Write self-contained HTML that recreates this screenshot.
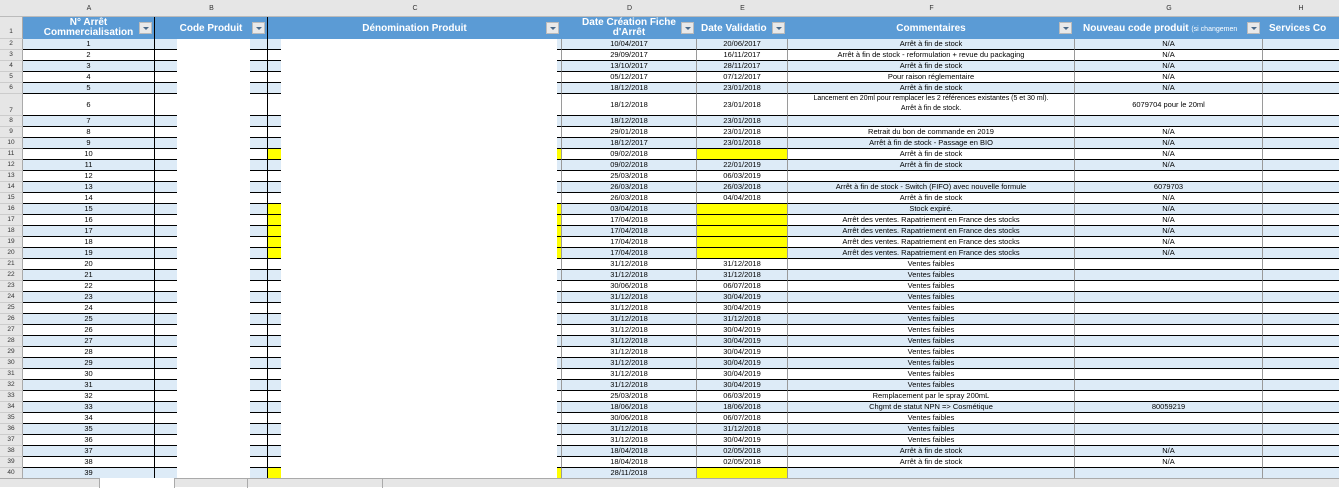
<!DOCTYPE html><html><head><meta charset="utf-8"><style>
*{margin:0;padding:0;box-sizing:border-box}
body{width:1339px;height:487px;overflow:hidden;background:#fff;font-family:"Liberation Sans",sans-serif;position:relative}
.hd{position:absolute;left:0;top:0;height:17px;width:1339px;background:#e6e6e6;border-bottom:1px solid #bbb;font-size:7px;color:#333}
.hd span{position:absolute;top:5px;text-align:center}
#rows{position:absolute;left:0;top:17px;width:1400px}
.r{display:flex;height:11px}
.r>i{font-style:normal;display:block;height:100%;border-bottom:1px solid #000;border-right:1px solid #9a9a9a;font-size:7.5px;line-height:10px;text-align:center;white-space:nowrap;overflow:hidden;color:#000}
.r>i.n{width:23px;background:#e6e6e6;border-right:1px solid #aaa;border-bottom:1px solid #ccc;font-size:6.5px;color:#333;text-align:center}
.a{width:132px;border-right-color:#000!important}.b{width:113px;border-right-color:#000!important}.c{width:294px}.d{width:135px}.e{width:91px}.f{width:287px}.g{width:188px}.h{width:120px}
.r:nth-child(even)>i:not(.n){background:#ddebf7}
.r>i.y{background:#ff0!important}
.t{height:22px!important}
.t>i{line-height:10px}
.t>i.n{line-height:30px}
.h1>i:not(.n){background:#5b9bd5!important;color:#fff;font-weight:bold;font-size:10px;position:relative;border-right-color:#5b9bd5!important;border-bottom:none}
.h1>i.a,.h1>i.b{border-right-color:#000!important}
.fb{position:absolute;right:2px;top:5px;width:13px;height:12px;background:#e9e9e9;border:1px solid #bbb}
.fb:after{content:"";position:absolute;left:3px;top:4px;border-left:3px solid transparent;border-right:3px solid transparent;border-top:3px solid #4a6a8a}
.m{position:absolute;background:#fff;top:39px;height:439px}
.tabs{position:absolute;left:0;top:478px;width:1339px;height:9px;background:#e6e6e6;border-top:1px solid #aaa}
</style></head><body>
<div class="hd"><span style="left:23px;width:132px">A</span><span style="left:155px;width:113px">B</span><span style="left:268px;width:294px">C</span><span style="left:562px;width:135px">D</span><span style="left:697px;width:91px">E</span><span style="left:788px;width:287px">F</span><span style="left:1075px;width:188px">G</span><span style="left:1263px;width:76px">H</span></div>
<div id="rows">
<div class="r t h1"><i class="n">1</i><i class="a" style="line-height:10px;padding-top:1px">N° Arrêt<br>Commercialisation<span class="fb"></span></i><i class="b" style="line-height:23px">Code Produit<span class="fb"></span></i><i class="c" style="line-height:23px">Dénomination Produit<span class="fb"></span></i><i class="d" style="line-height:10px;padding-top:1px">Date Création Fiche<br>d'Arrêt<span class="fb"></span></i><i class="e" style="line-height:23px;text-align:left;padding-left:4px">Date Validatio<span class="fb"></span></i><i class="f" style="line-height:23px">Commentaires<span class="fb"></span></i><i class="g" style="line-height:23px;text-align:left;padding-left:8px">Nouveau code produit <span style="font-weight:normal;font-size:7px">(si changemen</span><span class="fb"></span></i><i class="h" style="line-height:23px;text-align:left;padding-left:6px">Services Co</i></div>
<div class="r"><i class="n">2</i><i class="a">1</i><i class="b"></i><i class="c"></i><i class="d">10/04/2017</i><i class="e">20/06/2017</i><i class="f">Arrêt à fin de stock</i><i class="g">N/A</i><i class="h"></i></div>
<div class="r"><i class="n">3</i><i class="a">2</i><i class="b"></i><i class="c"></i><i class="d">29/09/2017</i><i class="e">16/11/2017</i><i class="f">Arrêt à fin de stock - reformulation + revue du packaging</i><i class="g">N/A</i><i class="h"></i></div>
<div class="r"><i class="n">4</i><i class="a">3</i><i class="b"></i><i class="c"></i><i class="d">13/10/2017</i><i class="e">28/11/2017</i><i class="f">Arrêt à fin de stock</i><i class="g">N/A</i><i class="h"></i></div>
<div class="r"><i class="n">5</i><i class="a">4</i><i class="b"></i><i class="c"></i><i class="d">05/12/2017</i><i class="e">07/12/2017</i><i class="f">Pour raison réglementaire</i><i class="g">N/A</i><i class="h"></i></div>
<div class="r"><i class="n">6</i><i class="a">5</i><i class="b"></i><i class="c"></i><i class="d">18/12/2018</i><i class="e">23/01/2018</i><i class="f">Arrêt à fin de stock</i><i class="g">N/A</i><i class="h"></i></div>
<div class="r t"><i class="n" style="line-height:34px">7</i><i class="a" style="line-height:21px">6</i><i class="b"></i><i class="c"></i><i class="d" style="line-height:21px">18/12/2018</i><i class="e" style="line-height:21px">23/01/2018</i><i class="f" style="font-size:7px">Lancement en 20ml pour remplacer les 2 références existantes (5 et 30 ml).<br>Arrêt à fin de stock.</i><i class="g" style="line-height:21px">6079704 pour le 20ml</i><i class="h"></i></div>
<div class="r"><i class="n">8</i><i class="a">7</i><i class="b"></i><i class="c"></i><i class="d">18/12/2018</i><i class="e">23/01/2018</i><i class="f"></i><i class="g"></i><i class="h"></i></div>
<div class="r"><i class="n">9</i><i class="a">8</i><i class="b"></i><i class="c"></i><i class="d">29/01/2018</i><i class="e">23/01/2018</i><i class="f">Retrait du bon de commande en 2019</i><i class="g">N/A</i><i class="h"></i></div>
<div class="r"><i class="n">10</i><i class="a">9</i><i class="b"></i><i class="c"></i><i class="d">18/12/2017</i><i class="e">23/01/2018</i><i class="f">Arrêt à fin de stock - Passage en BIO</i><i class="g">N/A</i><i class="h"></i></div>
<div class="r"><i class="n">11</i><i class="a">10</i><i class="b"></i><i class="c y"></i><i class="d">09/02/2018</i><i class="e y"></i><i class="f">Arrêt à fin de stock</i><i class="g">N/A</i><i class="h"></i></div>
<div class="r"><i class="n">12</i><i class="a">11</i><i class="b"></i><i class="c"></i><i class="d">09/02/2018</i><i class="e">22/01/2019</i><i class="f">Arrêt à fin de stock</i><i class="g">N/A</i><i class="h"></i></div>
<div class="r"><i class="n">13</i><i class="a">12</i><i class="b"></i><i class="c"></i><i class="d">25/03/2018</i><i class="e">06/03/2019</i><i class="f"></i><i class="g"></i><i class="h"></i></div>
<div class="r"><i class="n">14</i><i class="a">13</i><i class="b"></i><i class="c"></i><i class="d">26/03/2018</i><i class="e">26/03/2018</i><i class="f">Arrêt à fin de stock - Switch (FIFO) avec nouvelle formule</i><i class="g">6079703</i><i class="h"></i></div>
<div class="r"><i class="n">15</i><i class="a">14</i><i class="b"></i><i class="c"></i><i class="d">26/03/2018</i><i class="e">04/04/2018</i><i class="f">Arrêt à fin de stock</i><i class="g">N/A</i><i class="h"></i></div>
<div class="r"><i class="n">16</i><i class="a">15</i><i class="b"></i><i class="c y"></i><i class="d">03/04/2018</i><i class="e y"></i><i class="f">Stock expiré.</i><i class="g">N/A</i><i class="h"></i></div>
<div class="r"><i class="n">17</i><i class="a">16</i><i class="b"></i><i class="c y"></i><i class="d">17/04/2018</i><i class="e y"></i><i class="f">Arrêt des ventes. Rapatriement en France des stocks</i><i class="g">N/A</i><i class="h"></i></div>
<div class="r"><i class="n">18</i><i class="a">17</i><i class="b"></i><i class="c y"></i><i class="d">17/04/2018</i><i class="e y"></i><i class="f">Arrêt des ventes. Rapatriement en France des stocks</i><i class="g">N/A</i><i class="h"></i></div>
<div class="r"><i class="n">19</i><i class="a">18</i><i class="b"></i><i class="c y"></i><i class="d">17/04/2018</i><i class="e y"></i><i class="f">Arrêt des ventes. Rapatriement en France des stocks</i><i class="g">N/A</i><i class="h"></i></div>
<div class="r"><i class="n">20</i><i class="a">19</i><i class="b"></i><i class="c y"></i><i class="d">17/04/2018</i><i class="e y"></i><i class="f">Arrêt des ventes. Rapatriement en France des stocks</i><i class="g">N/A</i><i class="h"></i></div>
<div class="r"><i class="n">21</i><i class="a">20</i><i class="b"></i><i class="c"></i><i class="d">31/12/2018</i><i class="e">31/12/2018</i><i class="f">Ventes faibles</i><i class="g"></i><i class="h"></i></div>
<div class="r"><i class="n">22</i><i class="a">21</i><i class="b"></i><i class="c"></i><i class="d">31/12/2018</i><i class="e">31/12/2018</i><i class="f">Ventes faibles</i><i class="g"></i><i class="h"></i></div>
<div class="r"><i class="n">23</i><i class="a">22</i><i class="b"></i><i class="c"></i><i class="d">30/06/2018</i><i class="e">06/07/2018</i><i class="f">Ventes faibles</i><i class="g"></i><i class="h"></i></div>
<div class="r"><i class="n">24</i><i class="a">23</i><i class="b"></i><i class="c"></i><i class="d">31/12/2018</i><i class="e">30/04/2019</i><i class="f">Ventes faibles</i><i class="g"></i><i class="h"></i></div>
<div class="r"><i class="n">25</i><i class="a">24</i><i class="b"></i><i class="c"></i><i class="d">31/12/2018</i><i class="e">30/04/2019</i><i class="f">Ventes faibles</i><i class="g"></i><i class="h"></i></div>
<div class="r"><i class="n">26</i><i class="a">25</i><i class="b"></i><i class="c"></i><i class="d">31/12/2018</i><i class="e">31/12/2018</i><i class="f">Ventes faibles</i><i class="g"></i><i class="h"></i></div>
<div class="r"><i class="n">27</i><i class="a">26</i><i class="b"></i><i class="c"></i><i class="d">31/12/2018</i><i class="e">30/04/2019</i><i class="f">Ventes faibles</i><i class="g"></i><i class="h"></i></div>
<div class="r"><i class="n">28</i><i class="a">27</i><i class="b"></i><i class="c"></i><i class="d">31/12/2018</i><i class="e">30/04/2019</i><i class="f">Ventes faibles</i><i class="g"></i><i class="h"></i></div>
<div class="r"><i class="n">29</i><i class="a">28</i><i class="b"></i><i class="c"></i><i class="d">31/12/2018</i><i class="e">30/04/2019</i><i class="f">Ventes faibles</i><i class="g"></i><i class="h"></i></div>
<div class="r"><i class="n">30</i><i class="a">29</i><i class="b"></i><i class="c"></i><i class="d">31/12/2018</i><i class="e">30/04/2019</i><i class="f">Ventes faibles</i><i class="g"></i><i class="h"></i></div>
<div class="r"><i class="n">31</i><i class="a">30</i><i class="b"></i><i class="c"></i><i class="d">31/12/2018</i><i class="e">30/04/2019</i><i class="f">Ventes faibles</i><i class="g"></i><i class="h"></i></div>
<div class="r"><i class="n">32</i><i class="a">31</i><i class="b"></i><i class="c"></i><i class="d">31/12/2018</i><i class="e">30/04/2019</i><i class="f">Ventes faibles</i><i class="g"></i><i class="h"></i></div>
<div class="r"><i class="n">33</i><i class="a">32</i><i class="b"></i><i class="c"></i><i class="d">25/03/2018</i><i class="e">06/03/2019</i><i class="f">Remplacement par le spray 200mL</i><i class="g"></i><i class="h"></i></div>
<div class="r"><i class="n">34</i><i class="a">33</i><i class="b"></i><i class="c"></i><i class="d">18/06/2018</i><i class="e">18/06/2018</i><i class="f">Chgmt de statut NPN =&gt; Cosmétique</i><i class="g">80059219</i><i class="h"></i></div>
<div class="r"><i class="n">35</i><i class="a">34</i><i class="b"></i><i class="c"></i><i class="d">30/06/2018</i><i class="e">06/07/2018</i><i class="f">Ventes faibles</i><i class="g"></i><i class="h"></i></div>
<div class="r"><i class="n">36</i><i class="a">35</i><i class="b"></i><i class="c"></i><i class="d">31/12/2018</i><i class="e">31/12/2018</i><i class="f">Ventes faibles</i><i class="g"></i><i class="h"></i></div>
<div class="r"><i class="n">37</i><i class="a">36</i><i class="b"></i><i class="c"></i><i class="d">31/12/2018</i><i class="e">30/04/2019</i><i class="f">Ventes faibles</i><i class="g"></i><i class="h"></i></div>
<div class="r"><i class="n">38</i><i class="a">37</i><i class="b"></i><i class="c"></i><i class="d">18/04/2018</i><i class="e">02/05/2018</i><i class="f">Arrêt à fin de stock</i><i class="g">N/A</i><i class="h"></i></div>
<div class="r"><i class="n">39</i><i class="a">38</i><i class="b"></i><i class="c"></i><i class="d">18/04/2018</i><i class="e">02/05/2018</i><i class="f">Arrêt à fin de stock</i><i class="g">N/A</i><i class="h"></i></div>
<div class="r"><i class="n">40</i><i class="a">39</i><i class="b"></i><i class="c y"></i><i class="d">28/11/2018</i><i class="e y"></i><i class="f"></i><i class="g"></i><i class="h"></i></div>
</div>
<div class="m" style="left:177px;width:73px"></div>
<div class="m" style="left:281px;width:276px"></div>
<div class="tabs"><div style="position:absolute;left:99px;top:-1px;width:76px;height:10px;background:#fff;border-left:1px solid #aaa;border-right:1px solid #aaa"></div><div style="position:absolute;left:247px;top:0;width:1px;height:9px;background:#aaa"></div><div style="position:absolute;left:382px;top:0;width:1px;height:9px;background:#aaa"></div></div>
</body></html>
